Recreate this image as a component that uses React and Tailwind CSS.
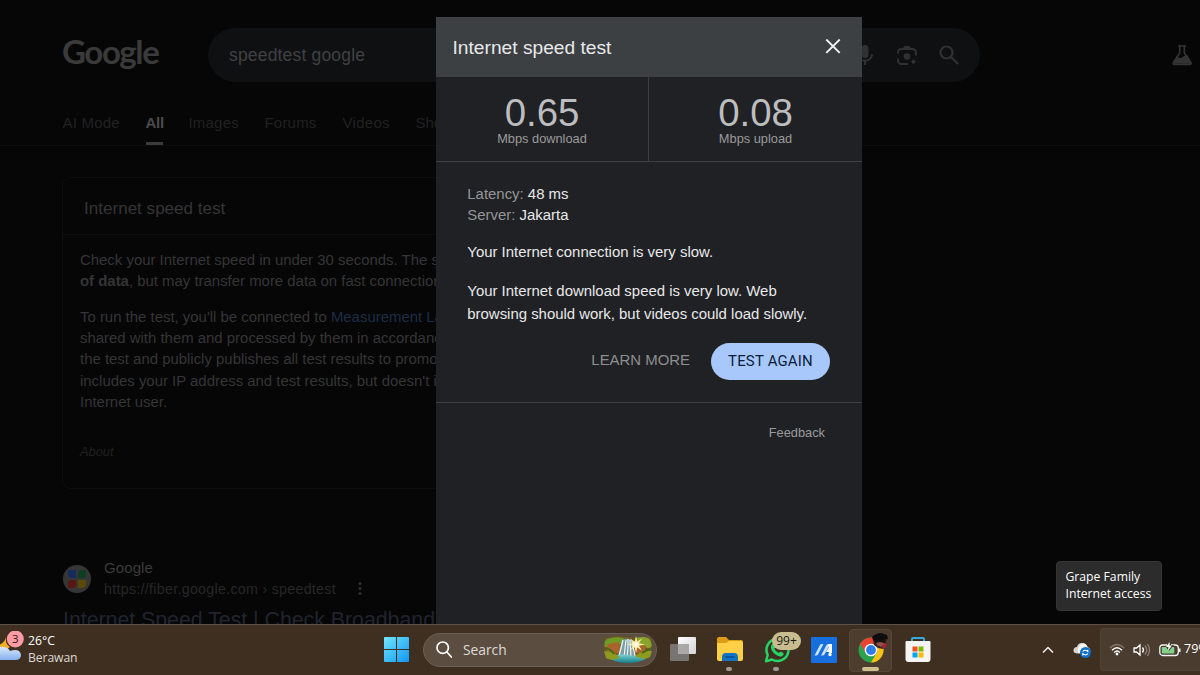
import clsx from "clsx";

const tabs = ["AI Mode", "All", "Images", "Forums", "Videos", "Shopping"];
const tabStyles = [
  "w-[57px] tracking-[0.2px]",
  "w-[17px] text-[#4b4b4c] font-bold tracking-[-0.3px]",
  "w-[50px] tracking-[0.2px]",
  "w-[52px] tracking-[0.2px]",
  "w-[47px] tracking-[0.3px]",
  "w-[70px]",
];

function SearchHeader() {
  return (
    <header className="h-[146px] border-b border-[#0d0d0e]">
      <div className="flex items-center pt-7 pl-[62px] pr-[6px]">
        <div className="w-[146px] h-[54px] font-['Lato'] font-bold text-[33px] leading-[47px] tracking-[-1.400px] text-[#3a3a3a]">
          Google
        </div>
        <div className="flex items-center w-[772px] h-[54px] rounded-full bg-[#0f1012] pl-[21px] pr-[19px] text-[#404142]">
          <span className="flex-1 text-[17.500px] tracking-[0.18px]">
            speedtest google
          </span>
          <div className="flex items-center gap-[18px] text-[#303133]">
            <svg width="24" height="24" viewBox="0 0 24 24" fill="currentColor">
              <path d="M12 15a3.500 3.500 0 0 0 3.500-3.500v-6a3.500 3.500 0 0 0-7 0v6A3.500 3.500 0 0 0 12 15zm6-4c0 3.500-2.600 5.800-6 5.800S6 14.500 6 11H4c0 4 3 7 7 7.600V22h2v-3.400c4-.6 7-3.600 7-7.600z" />
            </svg>
            <svg
              width="24"
              height="24"
              viewBox="0 0 24 24"
              fill="none"
              stroke="currentColor"
              strokeWidth="2"
            >
              <path d="M3 10.500V9.500a3.500 3.500 0 0 1 3.500-3.500h11A3.500 3.500 0 0 1 21 9.500v3M3 15.500v2a3.500 3.500 0 0 0 3.500 3.500H13M8.500 6 10 4h4l1.500 2" />
              <circle cx="12" cy="13.500" r="3.300" fill="currentColor" stroke="none" />
              <circle cx="18.500" cy="18.800" r="2" fill="currentColor" stroke="none" />
            </svg>
            <svg
              width="24"
              height="24"
              viewBox="0 0 24 24"
              fill="none"
              stroke="currentColor"
              strokeWidth="2.200"
            >
              <circle cx="9.500" cy="9.500" r="6" />
              <path d="m14 14 7 7" />
            </svg>
          </div>
        </div>
        <svg
          className="ml-auto"
          width="24"
          height="24"
          viewBox="0 0 24 24"
          fill="none"
          stroke="#343434"
          strokeWidth="1.600"
        >
          <path d="M8 3h8M9.700 3v7L3.400 19.500c-.8 1.300-.1 2 1 2h15.200c1.100 0 1.800-.7 1-2L14.300 10V3" />
          <path d="m4 20 3.500-5 3.500 1 5.500-3.500 4.500 7.500z" fill="#343434" />
        </svg>
      </div>
      <nav className="flex gap-[26px] pl-[62.500px] pt-[30px] text-[15px] text-[#212122]">
        {tabs.map((tab, i) => (
          <div
            key={tab}
            className={clsx(
              "h-[33px] leading-[22px] whitespace-nowrap",
              tabStyles[i],
              tab === "All" && "border-b-3 border-[#3b3b3b]",
            )}
          >
            {tab}
          </div>
        ))}
      </nav>
    </header>
  );
}

function TestCard() {
  return (
    <section className="ml-[62px] mt-[31px] w-[696px] h-[312px] rounded-[9px] border border-[#0d0d0e] text-[#353536]">
      <h2 className="h-[57px] pl-[21px] leading-[62px] text-[17.070px] border-b border-[#0d0d0e]">
        Internet speed test
      </h2>
      <div className="pl-[17px] pt-[14px] text-[14.930px] leading-[21.330px] whitespace-nowrap">
        <p>
          Check your Internet speed in under 30 seconds. The speed test
          <br />
          <b>of data</b>, but may transfer more data on fast connections.
        </p>
        <p className="mt-[14px]">
          To run the test, you'll be connected to{" "}
          <span className="text-[#1c2d45]">Measurement Lab</span>
          <br />
          shared with them and processed by them in accordance
          <br />
          the test and publicly publishes all test results to promote
          <br />
          includes your IP address and test results, but doesn't include
          <br />
          Internet user.
        </p>
        <p className="mt-[29px] text-[12.800px] italic text-[#212122]">About</p>
      </div>
    </section>
  );
}

function SearchResult() {
  return (
    <article className="ml-[63px] mt-[68px]">
      <div className="flex items-center">
        <svg width="28" height="28" viewBox="0 0 28 28">
          <circle cx="14" cy="14" r="14" fill="#363637" />
          <path d="M5 5h8v8H9q-4 0-4-4z" fill="#132c5c" />
          <path d="M15 13V9q0-4 4-4h4v4q0 4-4 4z" fill="#0c3d1f" />
          <path d="M5 23v-4q0-4 4-4h4v4q0 4-4 4z" fill="#591713" />
          <path d="M15 15h8v4q0 4-4 4h-4z" fill="#5c4906" />
        </svg>
        <div className="ml-[13px] w-[248px] leading-[21.500px]">
          <div className="text-[15px] tracking-[0.1px] text-[#3b3b3c]">Google</div>
          <div className="text-[14.200px] tracking-[0.31px] text-[#272728] whitespace-nowrap">
            https://fiber.google.com › speedtest
          </div>
        </div>
        <svg className="mt-5" width="16" height="16" viewBox="0 0 16 16" fill="#303031">
          <circle cx="8" cy="2.500" r="1.500" />
          <circle cx="8" cy="7.500" r="1.500" />
          <circle cx="8" cy="12.500" r="1.500" />
        </svg>
      </div>
      <h3 className="mt-[6px] text-[21.330px] leading-[28px] tracking-[-0.02px] text-[#20242f] whitespace-nowrap">
        Internet Speed Test | Check Broadband
      </h3>
    </article>
  );
}

function Stat({ value, label, className }) {
  return (
    <div className={clsx("flex flex-col items-center pt-[17px]", className)}>
      <div className="text-[38.400px] leading-[38px] text-[#bdbdbf]">{value}</div>
      <div className="text-[12.800px] leading-[13px] text-[#9a9a9c]">{label}</div>
    </div>
  );
}

function SpeedTestDialog() {
  return (
    <div className="absolute left-[436px] top-[17px] w-[426px] h-[608px] bg-[#202124] text-[14.930px] text-[#e8e8e9]">
      <div className="flex items-center justify-between h-[60px] pl-[16.500px] pr-[21px] bg-[#3c4043]">
        <h1 className="text-[19.200px] pt-[2px]">Internet speed test</h1>
        <svg width="16" height="16" viewBox="0 0 16 16" stroke="#f1f1f1" strokeWidth="1.900">
          <path d="m1.300 .5 13.400 13.400M14.700 .5 1.300 13.900" />
        </svg>
      </div>
      <div className="flex h-[85px] border-b border-[#3c4043]">
        <Stat
          value="0.65"
          label="Mbps download"
          className="w-[213px] border-r border-[#3c4043]"
        />
        <Stat value="0.08" label="Mbps upload" className="w-[213px]" />
      </div>
      <div className="h-[241px] pl-[31.300px] pr-8 pt-[20.600px] border-b border-[#3c4043]">
        <div className="leading-[21.330px] text-[#949597]">
          <div>
            Latency: <span className="text-[#e8e8e9]">48 ms</span>
          </div>
          <div>
            Server: <span className="text-[#e8e8e9]">Jakarta</span>
          </div>
        </div>
        <p className="mt-[15px] leading-[24px]">Your Internet connection is very slow.</p>
        <p className="mt-[14.400px] leading-[23.500px] whitespace-nowrap">
          Your Internet download speed is very low. Web
          <br />
          browsing should work, but videos could load slowly.
        </p>
        <div className="flex items-center justify-end gap-[21px] mt-[17px]">
          <button className="pb-[1px] text-[#8d8e90]">LEARN MORE</button>
          <button className="w-[119px] h-[37px] rounded-full bg-[#a8c7fa] text-[#0b1d3a] font-['Roboto','Liberation_Sans',sans-serif] tracking-[0.2px]">
            TEST AGAIN
          </button>
        </div>
      </div>
      <div className="pt-[19.500px] pr-[37px] text-right text-[12.800px] text-[#9a9a9c]">
        Feedback
      </div>
    </div>
  );
}

function WindowsIcon() {
  return (
    <svg width="25" height="25" viewBox="0 0 25 25">
      <defs>
        <linearGradient id="win" x1="0" y1="0" x2="1" y2="1">
          <stop offset="0" stopColor="#73e6fd" />
          <stop offset="1" stopColor="#0f96f2" />
        </linearGradient>
      </defs>
      <path
        d="M1 0h11v12H0V1q0-1 1-1zM13 0h11q1 0 1 1v11H13zM0 13h12v12H1q-1 0-1-1zM13 13h12v11q0 1-1 1H13z"
        fill="url(#win)"
      />
    </svg>
  );
}

function WaterfallArt() {
  return (
    <svg width="52" height="28" viewBox="0 0 52 28">
      <defs>
        <linearGradient id="pool" x1="0" y1="0" x2="0" y2="1">
          <stop offset="0" stopColor="#7bd2d6" />
          <stop offset="1" stopColor="#137c83" />
        </linearGradient>
      </defs>
      <path d="M4 2q10-3 22-1t21 0q4 3 3 9l-3 10q-9 6-22 6T5 22Q0 12 4 2z" fill="#6d5a20" />
      <path d="M5 3q9-3 17-1l-3 6-9 2-7 2q-2-6 2-9z" fill="#6f9a24" />
      <path d="M33 2q12-3 15 2 3 6 0 9l-10-4z" fill="#88a42c" />
      <path d="m6 8 11-2 2 11-10 1-6-5zM32 7l12 3-2 8-9-1z" fill="#a9642c" />
      <path d="M20 4q5-3 10 0l4 17H16z" fill="#7d9da3" />
      <path
        d="M21 4q-2 8-4 16M24 4l-2 17M26 3v9l-1 9M28 4l1 17M30 5l3 15"
        stroke="#e8f6f8"
        strokeWidth="1.200"
        fill="none"
      />
      <path d="M7 22q8-5 19-3t20 2q-7 6-20 6T7 22z" fill="url(#pool)" />
      <path d="M2 15q8 0 16 6-8 5-14 1zM50 15q-10-1-17 5 9 5 15 1z" fill="#8d9b1e" />
      <path d="M3 12q6 1 9 6M49 12l-9 5" stroke="#486717" strokeWidth="2" fill="none" />
      <path
        d="m34 0 1.300 5.500L40 2.500l-3 4.700 6 1.300-6 1.300 3 4.700-4.700-3L34 17l-1.300-5.500-4.700 3 3-4.700-6-1.300 6-1.300-3-4.700 4.700 3z"
        fill="#ffe9a3"
      />
      <circle cx="34" cy="8.500" r="2.600" fill="#fffbe2" />
    </svg>
  );
}

function TaskViewIcon() {
  return (
    <svg width="26" height="25" viewBox="0 0 26 25">
      <defs>
        <linearGradient id="pane" x1="0" y1="0" x2="1" y2="1">
          <stop offset="0" stopColor="#fff" />
          <stop offset="1" stopColor="#d3d3d3" />
        </linearGradient>
      </defs>
      <rect x="8" y="0" width="18" height="17" rx="1" fill="url(#pane)" />
      <rect y="7" width="19" height="17" rx="1" fill="#777472" />
      <path d="M8 7h11v10H8z" fill="#aaa9a8" />
    </svg>
  );
}

function FolderIcon() {
  return (
    <svg width="26" height="25" viewBox="0 0 26 25">
      <path d="M0 2q0-2 2-2h7l3 3h12q2 0 2 2v4H0z" fill="#dc9c13" />
      <path d="M0 6h9l3-2h12q2 0 2 2v16q0 2-2 2H2q-2 0-2-2z" fill="#ffcf48" />
      <path d="M5 24v-4q0-4 4-4h8q4 0 4 4v4z" fill="#1273c4" />
      <path d="M9 20h8" stroke="#0a4b87" strokeWidth="1.500" strokeLinecap="round" />
    </svg>
  );
}

function WhatsAppIcon() {
  return (
    <svg width="26" height="26" viewBox="0 0 26 26">
      <path
        d="M2 24.200 3.700 18A11 11 0 1 1 8 22.500z"
        fill="none"
        stroke="#27d366"
        strokeWidth="2.500"
        strokeLinejoin="round"
      />
      <path
        d="M8.500 7h1.700l1.300 3-1.200 1.700q1.500 3 4.500 4.300l1.700-1.600 3 1.500v1.500c-.5 1.600-2.200 2.200-3.600 2C11.500 18.600 7.500 14.600 7 10.800 6.800 9 7.500 7.500 8.500 7z"
        fill="#27d366"
      />
    </svg>
  );
}

function SlashAppIcon() {
  return (
    <svg width="26" height="26" viewBox="0 0 26 26">
      <rect width="26" height="26" rx="1" fill="#176fdd" />
      <path d="M3.500 18.500 9 8q.5-1 2-1h1.500L7 17.500q-.5 1-2 1zM10 18.500 15.500 8q.5-1 2-1H19l-5.500 10.500q-.5 1-2 1z" fill="#c9e3ff" />
      <path d="M17.500 7H21v9h-2.500l-1-1H15l2.500-4z" fill="#fff" />
      <circle cx="19" cy="17.500" r="1.700" fill="#fff" />
    </svg>
  );
}

function ChromeIcon() {
  return (
    <svg width="26" height="26" viewBox="0 0 26 26">
      <circle cx="13" cy="13" r="12.500" fill="#2ba24c" />
      <path d="M2.200 6.700A12.500 12.500 0 0 1 23.800 6.700H13L7.500 16z" fill="#ea4335" />
      <path d="M23.800 6.700A12.500 12.500 0 0 1 13 25.500l5.500-9.300L18 6.700z" fill="#fbc116" />
      <circle cx="13" cy="13" r="6.300" fill="#fff" />
      <circle cx="13" cy="13" r="4.900" fill="#2d7de9" />
    </svg>
  );
}

function AvatarBadge() {
  return (
    <svg className="absolute left-[21px] top-[2px]" width="18" height="18" viewBox="0 0 18 18">
      <path d="M2 8h13l1 6-4 3-5-1-4-3z" fill="#3a2120" />
      <path d="M1 5q4-4 9-4l6 2 1 4-8 2-7-1z" fill="#0f0d0e" />
      <path d="m5 9 8 0 0 3-3 3-4-2z" fill="#93534a" />
      <path d="m3 8 12 0-2 3-4-1-4 1z" fill="#171214" />
      <path d="m12 12 4-1-1 4-4 2z" fill="#a5283a" />
    </svg>
  );
}

function StoreIcon() {
  return (
    <svg width="26" height="26" viewBox="0 0 26 26">
      <path d="M7 5V2q0-1 1-1h10q1 0 1 1v3" fill="none" stroke="#36a7db" strokeWidth="2" />
      <path d="M1.500 4h23q1 0 1 1v17q0 3-3 3h-19q-3 0-3-3V5q0-1 1-1z" fill="#f4f4f4" />
      <path d="M7.500 9.500h5v5h-5z" fill="#f25022" />
      <path d="M13.500 9.500h5v5h-5z" fill="#7fba00" />
      <path d="M7.500 15.500h5v5h-5z" fill="#00a4ef" />
      <path d="M13.500 15.500h5v5h-5z" fill="#ffb900" />
    </svg>
  );
}

function TaskbarApp({ children, active, running }) {
  return (
    <div
      className={clsx(
        "relative flex items-center justify-center w-[43px] h-[43px] pb-[1px] rounded-[4px]",
        active && "bg-[#4c3d2e] border border-[#554738]",
      )}
    >
      {children}
      {running && (
        <span className="absolute bottom-[1px] left-[18px] w-[6px] h-[4px] rounded-full bg-[#a09a92]" />
      )}
      {active && (
        <span className="absolute bottom-0 left-[12px] w-[17px] h-[4px] rounded-full bg-[#d0c08e]" />
      )}
    </div>
  );
}

function Weather() {
  return (
    <div className="flex items-center w-[375px] h-full pb-[2px] text-[12.200px] leading-[17.300px] text-white">
      <svg width="24" height="36" viewBox="0 0 24 36">
        <defs>
          <linearGradient id="cloud" x1="0" y1="0" x2="0" y2="1">
            <stop offset="0" stopColor="#d8e9ff" />
            <stop offset="1" stopColor="#86b1ed" />
          </linearGradient>
        </defs>
        <path d="M6 6q-1 7 4 10l-9 6-3-8q6-1 8-8z" fill="#f3ae28" />
        <path d="M-4 29v-8q2-6 7-5 5 0 7 4 10-3 11 4 0 5-6 5z" fill="url(#cloud)" />
        <circle cx="15.300" cy="8" r="8.500" fill="#ff9ba4" />
        <text x="15.300" y="12" textAnchor="middle" fontSize="11.500" fill="#2b1416">
          3
        </text>
      </svg>
      <div className="pl-1">
        <div>26°C</div>
        <div className="text-[#dcd8d4] tracking-[-0.1px]">Berawan</div>
      </div>
    </div>
  );
}

function SystemTray() {
  return (
    <div className="flex items-center ml-auto h-full pb-[1px]">
      <svg width="12" height="8" viewBox="0 0 12 8" fill="none" stroke="#f3f0ed" strokeWidth="1.500">
        <path d="m1 6.500 5-5 5 5" />
      </svg>
      <svg className="ml-[19px]" width="18" height="16" viewBox="0 0 18 16">
        <path d="M4 11.500Q0 11 .5 8 1 5 4 5 5 1 9 1t5.500 4Q18 6 17 10l-2 1.500z" fill="#d6d4d1" />
        <path d="M8 2q5-2 7 4l-6 5H5q-1-6 3-9z" fill="#f7f5f1" />
        <circle cx="12.500" cy="10.500" r="5.500" fill="#0d6fc7" />
        <path
          d="M9.800 9.500q2-2.500 5 0V7.700m0 4q-2 2.500-5 0v1.700"
          fill="none"
          stroke="#fff"
          strokeWidth="1.100"
        />
      </svg>
      <div className="flex items-center ml-[9px] pl-[8px] w-[100px] h-[43px] rounded-l-[4px] bg-[#4a3c2e] border border-r-0 border-[#514335]">
        <svg className="shrink-0" width="16" height="13" viewBox="0 0 15 13" fill="none" strokeWidth="1.400">
          <path d="M.5 5q7-7 14 0" stroke="#7f756b" />
          <path d="M2.500 7.300q5-5 10 0M4.700 9.400q2.800-2.700 5.600 0" stroke="#fff" />
          <circle cx="7.500" cy="11" r="1.400" fill="#fff" />
        </svg>
        <svg
          className="shrink-0 ml-[8px]"
          width="18"
          height="14"
          viewBox="0 0 18 14"
          fill="none"
          stroke="#fff"
          strokeWidth="1.300"
        >
          <path d="M1 5v4h2.500L7 12V2L3.500 5zM9.500 4.500q2 2.500 0 5" />
          <path d="M12 2.500q3.500 4.500 0 9M14.500 1q4 6 0 12" stroke="#8b8177" />
        </svg>
        <svg className="shrink-0 ml-[8px]" width="22" height="16" viewBox="0 0 22 16">
          <rect x=".8" y="3" width="18.500" height="10.500" rx="3" fill="none" stroke="#f4f4f4" strokeWidth="1.300" />
          <rect x="2.800" y="5" width="12.500" height="6.500" rx="1" fill="#81d28b" />
          <path d="M20.800 6.500v3.500" stroke="#f4f4f4" strokeWidth="1.500" />
          <path d="M8 0h4v3h3l-5 6-4-5h2z" fill="#4a3c2e" />
          <path d="m10.500 0-3.500 5h2.500l-.7 4 4.200-5.500h-2.500z" fill="#fff" />
        </svg>
        <span className="ml-[3px] text-[12.500px] text-white">79%</span>
      </div>
    </div>
  );
}

function Taskbar() {
  return (
    <footer className="relative flex items-center h-[51px] shrink-0 overflow-hidden border-t border-[#5b5147] bg-[#3f2f20] font-['Open_Sans','Noto_Sans',sans-serif]">
      <Weather />
      <TaskbarApp>
        <WindowsIcon />
      </TaskbarApp>
      <div className="flex items-center ml-[5px] mr-[4px] mb-[1px] w-[234px] h-[34px] rounded-full bg-[#5b4d40] border border-[#6b5e52] pl-[12px] pr-[2px]">
        <svg width="16" height="17" viewBox="0 0 16 17" fill="none" stroke="#fff" strokeWidth="1.700">
          <circle cx="6.700" cy="6.700" r="5.700" />
          <path d="m10.900 11 4.500 5" strokeLinecap="round" />
        </svg>
        <span className="flex-1 pl-[11px] pt-[1px] text-[13.800px] text-[#dedad6]">Search</span>
        <WaterfallArt />
      </div>
      <div className="flex gap-1">
        <TaskbarApp>
          <TaskViewIcon />
        </TaskbarApp>
        <TaskbarApp running>
          <FolderIcon />
        </TaskbarApp>
        <TaskbarApp running>
          <WhatsAppIcon />
          <span className="absolute left-[17px] top-[3px] w-[29px] h-[18px] rounded-full bg-[#c9bd90] text-center text-[12px] leading-[17px] text-[#201b12]">
            99+
          </span>
        </TaskbarApp>
        <TaskbarApp>
          <SlashAppIcon />
        </TaskbarApp>
        <TaskbarApp active>
          <ChromeIcon />
          <AvatarBadge />
        </TaskbarApp>
        <TaskbarApp>
          <StoreIcon />
        </TaskbarApp>
      </div>
      <SystemTray />
    </footer>
  );
}

export default function App() {
  return (
    <div className="relative flex flex-col w-[1200px] h-[675px] overflow-hidden bg-[#060606] font-['Liberation_Sans',Arial,sans-serif]">
      <main className="h-[624px] overflow-hidden">
        <SearchHeader />
        <TestCard />
        <SearchResult />
      </main>
      <SpeedTestDialog />
      <Taskbar />
      <div className="absolute left-[1056px] top-[561px] w-[106px] h-[50px] rounded-[4px] border border-[#363636] bg-[#2c2c2c] pl-[8.500px] pt-[7px] font-['Open_Sans','Noto_Sans',sans-serif] text-[12.200px] leading-[16.500px] text-white whitespace-nowrap">
        Grape Family
        <br />
        Internet access
      </div>
    </div>
  );
}
